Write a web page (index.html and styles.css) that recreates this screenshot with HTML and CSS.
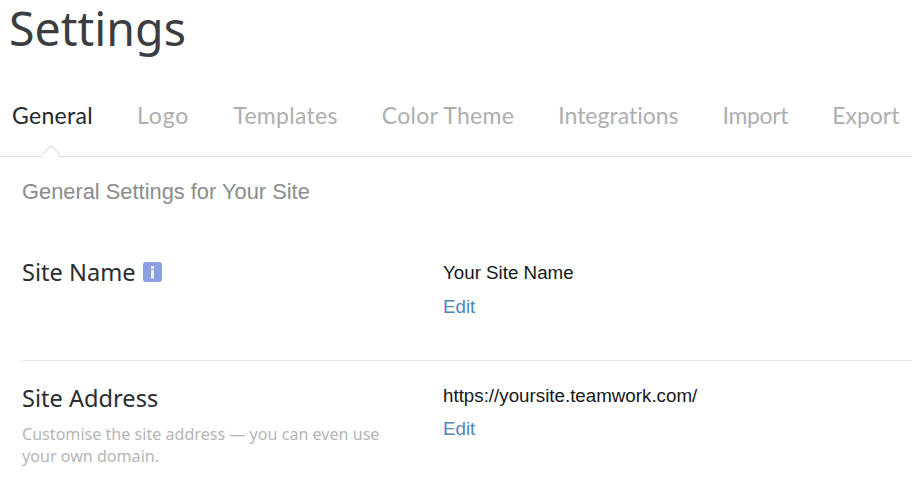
FILE: index.html
```html
<!DOCTYPE html>
<html lang="en">
<head>
<meta charset="utf-8">
<title>Settings</title>
<link rel="stylesheet" href="styles.css">
</head>
<body>
<h1 class="title">Settings</h1>
<nav class="tabs">
  <a class="tab tab-active">General</a>
  <a class="tab tab-loose">Logo</a>
  <a class="tab">Templates</a>
  <a class="tab">Color Theme</a>
  <a class="tab tab-snug">Integrations</a>
  <a class="tab tab-tight">Import</a>
  <a class="tab tab-snug">Export</a>
</nav>
<main class="content">
  <h2 class="section-title">General Settings for Your Site</h2>
  <section class="row row-first">
    <div class="label-col">
      <h3 class="label label-name">Site Name
        <svg class="info" width="19" height="20" viewBox="0 0 19 20" aria-hidden="true">
          <rect width="19" height="20" rx="3" fill="#8b9fe4"/>
          <rect x="8" y="4" width="3" height="3" fill="#eef1fb"/>
          <rect x="8" y="8" width="3" height="8.5" fill="#eef1fb"/>
        </svg>
      </h3>
    </div>
    <div class="value-col">
      <div class="value">Your Site Name</div>
      <a class="edit">Edit</a>
    </div>
  </section>
  <section class="row row-second">
    <div class="label-col">
      <h3 class="label">Site Address</h3>
      <p class="hint">Customise the site address — you can even use your own domain.</p>
    </div>
    <div class="value-col">
      <div class="value">https://yoursite.teamwork.com/</div>
      <a class="edit edit-tight">Edit</a>
    </div>
  </section>
</main>
</body>
</html>
```
FILE: styles.css
```css
html, body {
  margin: 0;
  padding: 0;
  background: #fff;
  overflow: hidden;
}
body {
  width: 912px;
  height: 484px;
  font-family: "Liberation Sans", Arial, sans-serif;
  font-variant-ligatures: none;
}
.title {
  margin: 0;
  padding-left: 9px;
  font-family: "Noto Sans", sans-serif;
  font-weight: 400;
  font-size: 46.5px;
  line-height: 56px;
  color: #3b3d40;
}
.tabs {
  display: flex;
  gap: 44px;
  margin-top: 30px;
  padding: 0 0 0 12px;
  box-sizing: border-box;
  height: 71px;
  border-bottom: 1px solid #dcdcdc;
  font-family: Lato, sans-serif;
  font-size: 23px;
  letter-spacing: 0.3px;
  white-space: nowrap;
}
.tab {
  color: #aeaeae;
  height: 44px;
  line-height: 59px;
  position: relative;
}
.tab-loose {
  letter-spacing: 0.9px;
}
.tab-snug {
  letter-spacing: 0;
}
.tab-tight {
  letter-spacing: -0.35px;
}
.tab-active {
  color: #26282b;
}
.tab-active::after {
  content: "";
  position: absolute;
  left: 32px;
  top: 62px;
  width: 13px;
  height: 13px;
  background: #fff;
  border-left: 1px solid #dcdcdc;
  border-top: 1px solid #dcdcdc;
  transform: rotate(45deg);
}
.content {
  padding: 0 0 0 22px;
}
.section-title {
  margin: 22px 0 0;
  font-weight: 400;
  font-size: 21.85px;
  line-height: 26px;
  color: #8c8c8c;
}
.row {
  display: flex;
}
.row-first {
  margin-top: 50px;
  height: 105px;
  border-bottom: 1px solid #e6e6e6;
}
.row-second {
  padding-top: 21px;
}
.label-col {
  width: 421px;
  flex: none;
}
.label {
  margin: 0;
  display: flex;
  align-items: center;
  gap: 7px;
  font-family: "Noto Sans", sans-serif;
  font-weight: 400;
  font-size: 23.6px;
  line-height: 30px;
  color: #2b2d30;
  padding-top: 1px;
}
.label-name {
  padding-top: 2px;
}
.hint {
  margin: 10px 0 0;
  width: 375px;
  font-family: "Noto Sans", sans-serif;
  font-size: 16.1px;
  line-height: 22px;
  color: #b5b5b5;
}
.value {
  font-size: 18.75px;
  line-height: 24px;
  color: #15171a;
  padding-top: 6px;
}
.row-second .value {
  padding-top: 2px;
}
.edit {
  display: block;
  margin-top: 10px;
  font-size: 18.75px;
  line-height: 24px;
  color: #4f87b4;
}
.edit-tight {
  margin-top: 9px;
}
```
